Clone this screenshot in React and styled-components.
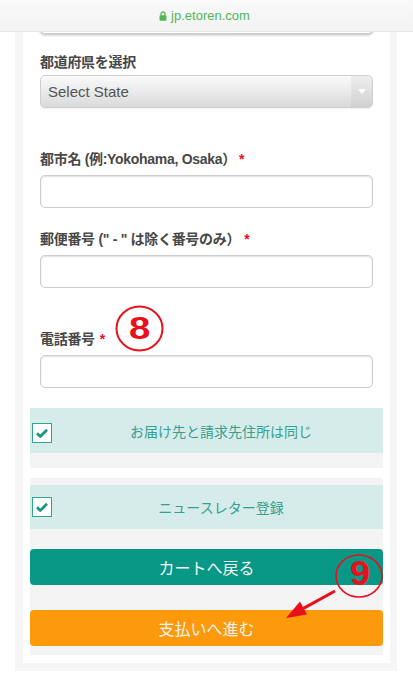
import React from 'react';
import styled, { createGlobalStyle } from 'styled-components';

const red = '#e8101a';
const teal = '#0a9886';

const GlobalStyle = createGlobalStyle`
  html, body {
    margin: 0;
    padding: 0;
    background: #fff;
  }
  body {
    font-family: "Noto Sans CJK JP", "Noto Sans", sans-serif;
  }
`;

const UrlBar = styled.div`
  position: fixed;
  top: 0;
  left: 0;
  right: 0;
  height: 31px;
  z-index: 10;
  display: flex;
  align-items: center;
  justify-content: center;
  gap: 4px;
  background: linear-gradient(#f9f9f9, #f3f3f3);
  border-bottom: 1px solid #e4e4e4;
  color: #52b556;
  font: 13px "Liberation Sans", Arial, sans-serif;
  padding-right: 4px;
`;

const Card = styled.div`
  margin-left: 15px;
  width: 382px;
  box-sizing: border-box;
  background: #fff;
  border: solid #f6f6f6;
  border-width: 0 7px 8px 8px;
  padding: 0 7px 8px;
`;

const Fields = styled.div`
  padding: 0 10px;
  display: flex;
  flex-direction: column;
`;

const Group = styled.div`
  margin-top: ${(p) => p.$top}px;
  display: flex;
  flex-direction: column;
`;

// latin part in Arial metrics, japanese falls through to Noto CJK
const Label = styled.div`
  position: relative;
  font-family: "Liberation Sans", "Noto Sans CJK JP", sans-serif;
  font-size: 14px;
  font-weight: 700;
  letter-spacing: -0.3px;
  line-height: 20px;
  color: #484848;
  margin-bottom: ${(p) => (p.$tight ? 3 : 6)}px;
`;

const Req = styled.span`
  color: ${red};
  margin-left: ${(p) => p.$gap}px;
`;

const Input = styled.div`
  height: 33px;
  box-sizing: border-box;
  border: 1px solid #cdcdcd;
  border-radius: 5px;
  background: #fff;
  box-shadow: inset 0 1px 2px rgba(0, 0, 0, 0.12);
`;

const CutInput = styled(Input)`
  height: 34px;
  border-top: none;
  border-radius: 0 0 5px 5px;
  box-shadow: 0 1px 3px rgba(0, 0, 0, 0.28);
`;

const SelectBox = styled.div`
  height: 33px;
  box-sizing: border-box;
  display: flex;
  border: 1px solid #cfcfcf;
  border-radius: 5px;
  overflow: hidden;
  background: linear-gradient(#fafafa, #dadada);
  box-shadow: 0 1px 1px rgba(0, 0, 0, 0.06);
`;

const SelectText = styled.div`
  flex: 1;
  display: flex;
  align-items: center;
  padding-left: 7px;
  font: 15px "Liberation Sans", Arial, sans-serif;
  color: #555;
`;

const SelectArrow = styled.div`
  width: 21px;
  display: flex;
  align-items: center;
  justify-content: center;
  background: rgba(0, 0, 0, 0.045);
  &::after {
    content: '';
    border: 4px solid transparent;
    border-top: 5px solid #fff;
    border-bottom: none;
  }
`;

const Section = styled.div`
  position: relative;
  background: #f4f4f4;
  margin-top: ${(p) => p.$top}px;
  padding: ${(p) => p.$pad};
  display: flex;
  flex-direction: column;
`;

const CheckRow = styled.div`
  height: ${(p) => p.$h}px;
  display: flex;
  align-items: center;
  background: #d6ecea;
  padding-left: 2px;
`;

const Box = styled.div`
  width: 20px;
  height: 20px;
  box-sizing: border-box;
  border: 1.5px solid #2fa694;
  background: #fff;
  display: flex;
  align-items: center;
  justify-content: center;
  margin-top: ${(p) => p.$shift || 0}px;
`;

const CheckText = styled.div`
  flex: 1;
  text-align: center;
  padding-left: 7px;
  font-size: 14px;
  color: #35a090;
`;

const Button = styled.div`
  height: 36px;
  margin-top: ${(p) => p.$top}px;
  border-radius: 4px;
  background: ${(p) => p.$bg};
  color: #f4f4f4;
  font-size: 16px;
  display: flex;
  align-items: center;
  justify-content: center;
`;

const Mark = styled.svg`
  position: absolute;
  left: ${(p) => p.$x}px;
  top: ${(p) => p.$y}px;
  overflow: visible;
  pointer-events: none;
`;

const Lock = () => (
  <svg width="8" height="10" viewBox="0 0 8 10">
    <path d="M2 4.5V3a2 2 0 0 1 4 0v1.5" fill="none" stroke="#52b556" strokeWidth="1.3" />
    <rect x="0.5" y="4.3" width="7" height="5.4" rx="0.8" fill="#52b556" />
  </svg>
);

const Check = () => (
  <svg width="12" height="10" viewBox="0 0 12 10">
    <path d="M1 5.2l3.3 3.3L11 1.8" fill="none" stroke="#1f9484" strokeWidth="2.8" strokeLinejoin="round" />
  </svg>
);

const Field = ({ top, label, gap, children, extra }) => (
  <Group $top={top}>
    <Label>
      {label}
      {gap !== undefined && <Req $gap={gap}>*</Req>}
      {extra}
    </Label>
    {children}
  </Group>
);

const Eight = () => (
  <Mark $x={74} $y={-26} width="51" height="50">
    <ellipse cx="25.5" cy="25.5" rx="23" ry="22" fill="none" stroke={red} strokeWidth="2" />
    <text x="15" y="36" fill={red} fontSize="31" fontWeight="700" fontFamily="Liberation Sans, Arial, sans-serif" textLength="21" lengthAdjust="spacingAndGlyphs">8</text>
  </Mark>
);

const Nine = () => (
  <Mark $x={240} $y={70} width="120" height="80">
    <ellipse cx="89" cy="28" rx="23" ry="21" fill="none" stroke={red} strokeWidth="1.6" />
    <text x="80" y="37" fill={red} fontSize="35" fontWeight="700" fontFamily="Liberation Sans, Arial, sans-serif" textLength="20" lengthAdjust="spacingAndGlyphs">9</text>
    <line x1="65" y1="43" x2="33" y2="60.6" stroke={red} strokeWidth="3" />
    <polygon points="16,70 37,66.5 30,53.5" fill={red} />
  </Mark>
);

export default function App() {
  return (
    <>
      <GlobalStyle />
      <UrlBar>
        <Lock />
        <span>jp.etoren.com</span>
      </UrlBar>
      <Card>
        <Fields>
          <CutInput />
          <Group $top={18}>
            <Label $tight>都道府県を選択</Label>
            <SelectBox>
              <SelectText>Select State</SelectText>
              <SelectArrow />
            </SelectBox>
          </Group>
          <Field top={41} label="都市名 (例:Yokohama, Osaka）" gap={3}>
            <Input />
          </Field>
          <Field top={21} label={'郵便番号 (" - " は除く番号のみ）'} gap={4}>
            <Input />
          </Field>
          <Field top={41} label="電話番号" gap={5} extra={<Eight />}>
            <Input />
          </Field>
        </Fields>
        <Section $top={20} $pad="0 0 15px">
          <CheckRow $h={45}>
            <Box $shift={5}>
              <Check />
            </Box>
            <CheckText>お届け先と請求先住所は同じ</CheckText>
          </CheckRow>
        </Section>
        <Section $top={10} $pad="7px 0 9px">
          <CheckRow $h={44}>
            <Box>
              <Check />
            </Box>
            <CheckText>ニュースレター登録</CheckText>
          </CheckRow>
          <Button $top={20} $bg={teal}>カートへ戻る</Button>
          <Button $top={25} $bg="#fc9a0b">支払いへ進む</Button>
          <Nine />
        </Section>
      </Card>
    </>
  );
}
